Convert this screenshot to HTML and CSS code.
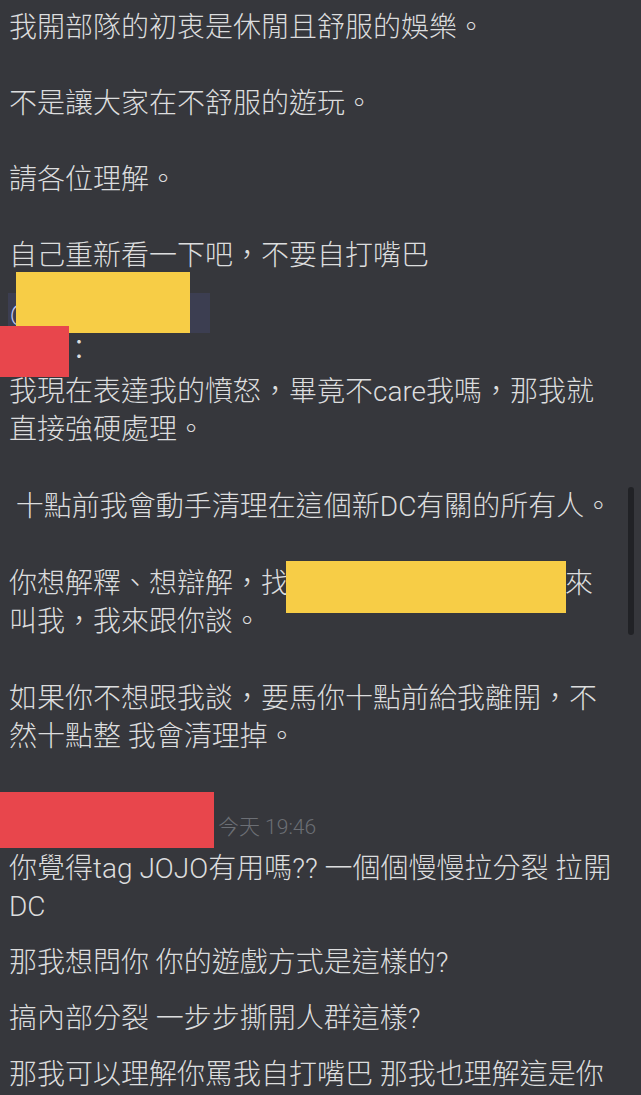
FILE: index.html
```html
<!DOCTYPE html>
<html>
<head>
    <meta charset="UTF-8">
    <title>Chat</title>
    <link rel="stylesheet" href="styles.css">
</head>
<body>
    <main class="chat">
        <div class="message">
            <p class="line">我開部隊的初衷是休閒且舒服的娛樂。</p>
            <p class="line para">不是讓大家在不舒服的遊玩。</p>
            <p class="line para">請各位理解。</p>
            <p class="line para">自己重新看一下吧，不要自打嘴巴</p>
            <p class="line mentionLine"><span class="mention">@<span class="cover coverYellow mentionCover"></span></span></p>
            <p class="line"><span class="hiddenName"><span class="cover coverRed nameCover"></span></span>：</p>
            <p class="line afterColon">我現在表達我的憤怒，畢竟不care我嗎，那我就直接強硬處理。</p>
            <p class="line para2">&nbsp;十點前我會動手清理在這個新DC有關的所有人。</p>
            <p class="line para2">你想解釋、想辯解，找<span class="hiddenText"><span class="cover coverYellow textCover"></span></span>來叫我，我來跟你談。</p>
            <p class="line para2">如果你不想跟我談，要馬你十點前給我離開，不然十點整 我會清理掉。</p>
        </div>
        <div class="message newMessage">
            <div class="header">
                <span class="hiddenName wideName"><span class="cover coverRed headerCover"></span></span>
                <span class="time">今天 19:46</span>
            </div>
            <p class="line firstLine">你覺得tag JOJO有用嗎?? 一個個慢慢拉分裂 拉開 DC</p>
            <p class="line followUp">那我想問你 你的遊戲方式是這樣的?</p>
            <p class="line followUp">搞內部分裂 一步步撕開人群這樣?</p>
            <p class="line followUp">那我可以理解你罵我自打嘴巴 那我也理解這是你的遊戲方式</p>
        </div>
    </main>
    <div class="scrollThumb"></div>
</body>
</html>
```

FILE: styles.css
```css
html, body {
    margin: 0;
    height: 100%;
    overflow: hidden;
    background: #36373c;
}

.chat {
    padding: 9px 24px 0 9px;
    font-family: Roboto, "Noto Sans CJK TC", sans-serif;
    font-size: 28px;
    font-weight: 300;
    line-height: 38px;
    color: #dcddde;
}

.line {
    margin: 0;
}

.para {
    margin-top: 38px;
}

.para2 {
    margin-top: 39px;
}

.mentionLine {
    margin-top: 17px;
    line-height: 40px;
    height: 40px;
}

.mention {
    position: relative;
    display: inline-block;
    width: 202px;
    height: 40px;
    margin-left: -1px;
    padding-left: 2px;
    box-sizing: border-box;
    background: #3c3e51;
    color: #c9cdfb;
    font-size: 24px;
}

.afterColon {
    margin-top: 3px;
}

.cover {
    position: absolute;
    display: block;
}

.coverYellow {
    background: #f7cd46;
}

.coverRed {
    background: #e8464c;
}

.mentionCover {
    left: 8px;
    top: -21px;
    width: 174px;
    height: 61px;
}

.hiddenName {
    position: relative;
    display: inline-block;
    width: 56px;
    height: 38px;
    vertical-align: top;
}

.nameCover {
    left: -9px;
    top: -6px;
    width: 69px;
    height: 51px;
}

.hiddenText {
    position: relative;
    display: inline-block;
    width: 276px;
    height: 38px;
    vertical-align: top;
}

.textCover {
    left: -3px;
    top: -4px;
    width: 280px;
    height: 52px;
}

.newMessage {
    margin-top: 52px;
}

.header {
    display: flex;
    align-items: center;
    height: 38px;
}

.wideName {
    width: 205px;
}

.headerCover {
    left: -9px;
    top: -16px;
    width: 214px;
    height: 56px;
}

.time {
    margin-left: 4px;
    font-size: 21px;
    color: #6c6f75;
}

.firstLine {
    margin-top: 4px;
}

.followUp {
    margin-top: 18px;
}

.scrollThumb {
    position: absolute;
    left: 628px;
    top: 487px;
    width: 6px;
    height: 148px;
    border-radius: 3px;
    background: #212226;
}
```
